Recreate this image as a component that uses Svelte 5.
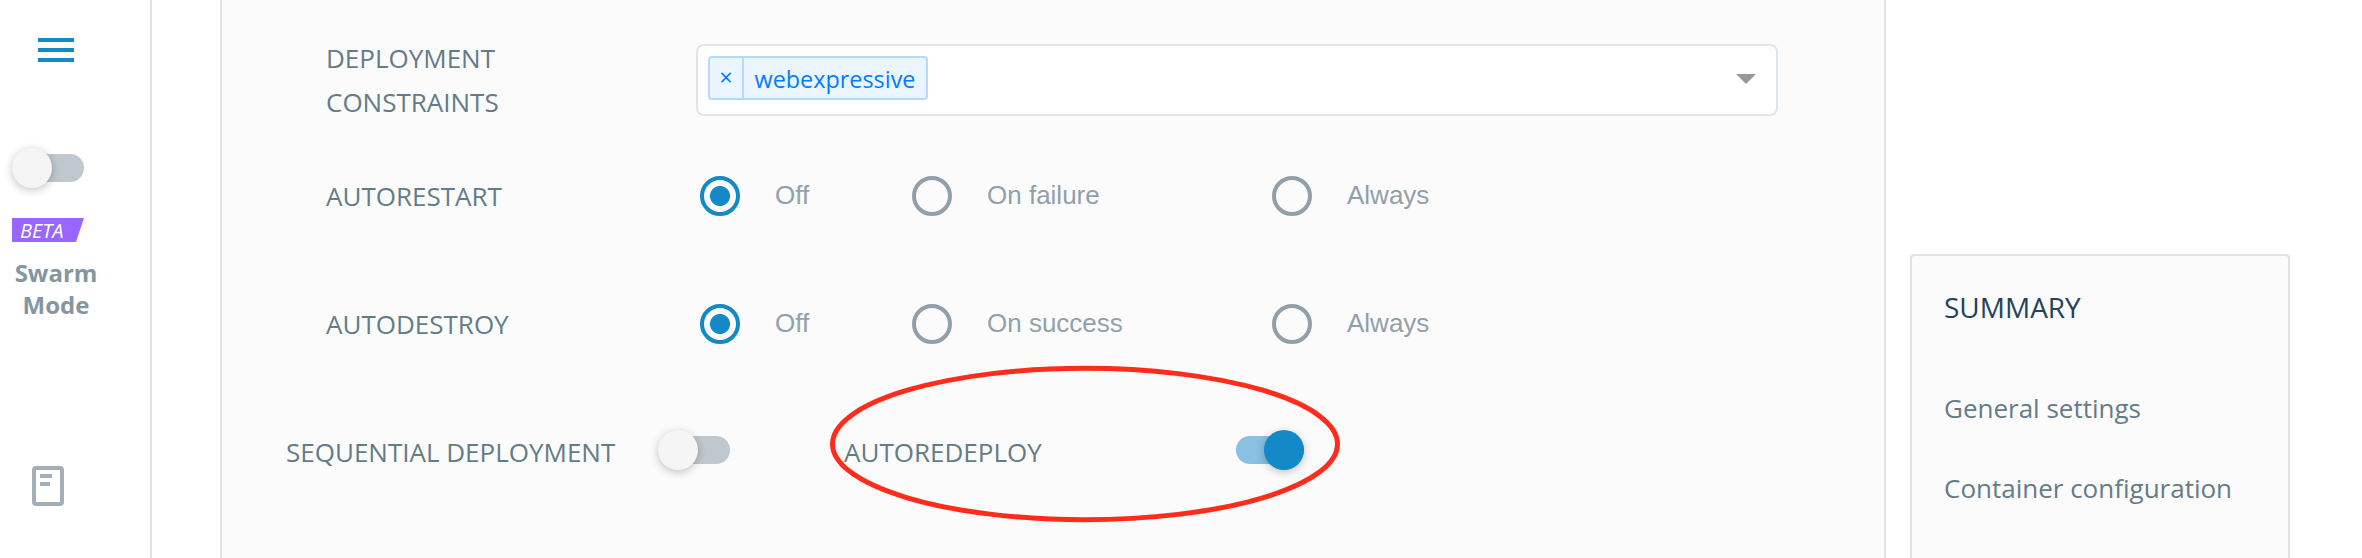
<script>
  const radioRows = [
    { label: 'AUTORESTART', options: ['Off', 'On failure', 'Always'] },
    { label: 'AUTODESTROY', options: ['Off', 'On success', 'Always'] }
  ];
  const sections = ['General settings', 'Container configuration'];
  let picked = $state([0, 0]);
  let swarm = $state(false);
  let sequential = $state(false);
  let redeploy = $state(true);
</script>

{#snippet toggle(on, flip, name)}
  <button class="toggle" class:on role="switch" aria-checked={on} aria-label={name} onclick={flip}>
    <span class="knob"></span>
  </button>
{/snippet}

<div class="page">
  <aside class="sidebar">
    <svg class="menu" width="36" height="24" viewBox="0 0 36 24" fill="#1489c8">
      <rect width="36" height="4" /><rect y="10" width="36" height="4" /><rect y="20" width="36" height="4" />
    </svg>
    {@render toggle(swarm, () => (swarm = !swarm), 'Swarm mode')}
    <div class="beta">BETA</div>
    <div class="mode">Swarm<br />Mode</div>
    <svg class="doc" width="32" height="40" viewBox="0 0 32 40">
      <rect x="2" y="2" width="28" height="36" rx="2" fill="none" stroke="#a1b0b8" stroke-width="4" />
      <path d="M8 8h12v4H8zM8 16h10v4H8z" fill="#a1b0b8" />
    </svg>
  </aside>

  <main class="panel">
    <div class="row constraints">
      <div class="label">DEPLOYMENT<br />CONSTRAINTS</div>
      <div class="select">
        <div class="tag"><span class="remove">×</span><span class="value">webexpressive</span></div>
        <svg width="20" height="10" viewBox="0 0 20 10"><path d="M0 0h20L10 10z" fill="#999" /></svg>
      </div>
    </div>
    {#each radioRows as row, r}
      <div class="row choice">
        <div class="label">{row.label}</div>
        <div class="options">
          {#each row.options as option, i}
            <button class="option" class:checked={picked[r] === i} onclick={() => (picked[r] = i)}>
              <span class="circle"></span><span>{option}</span>
            </button>
          {/each}
        </div>
      </div>
    {/each}
    <div class="switches">
      <div class="label seq">SEQUENTIAL DEPLOYMENT</div>
      {@render toggle(sequential, () => (sequential = !sequential), 'Sequential deployment')}
      <div class="redeploy">
        <div class="label">AUTOREDEPLOY</div>
        {@render toggle(redeploy, () => (redeploy = !redeploy), 'Autoredeploy')}
        <svg class="ring" width="512" height="160" viewBox="0 0 512 160">
          <ellipse cx="256" cy="80" rx="252.5" ry="75.7" fill="none" stroke="#ff2c1c" stroke-width="5" />
        </svg>
      </div>
    </div>
  </main>

  <section class="summary">
    <h2>SUMMARY</h2>
    {#each sections as section}
      <div class="section">{section}</div>
    {/each}
  </section>
</div>

<style>
  :global(body) { background: #fff; overflow: hidden; }
  .page {
    display: flex;
    align-items: flex-start;
    height: 558px;
    overflow: hidden;
    font-family: 'Open Sans', sans-serif;
    font-size: 26px;
    color: #647b88;
  }
  button { border: 0; padding: 0; background: none; font: inherit; color: inherit; cursor: pointer; }
  svg { display: block; }

  .sidebar {
    box-sizing: border-box;
    width: 152px;
    height: 558px;
    padding: 38px 0 0 12px;
    border-right: 2px solid #dfe4e8;
    flex: none;
  }
  .menu { margin: 0 0 86px 26px; }
  .beta {
    width: 72px;
    height: 24px;
    margin-top: 30px;
    box-sizing: border-box;
    padding-left: 8px;
    background: #9966ff;
    clip-path: polygon(0 0, 100% 0, 64px 100%, 0 100%);
    color: #fff;
    font-size: 20px;
    font-style: italic;
    line-height: 25px;
  }
  .mode {
    width: 88px;
    margin-top: 15px;
    text-align: center;
    font-size: 24px;
    font-weight: 700;
    line-height: 32px;
    color: #8396a0;
  }
  .doc { margin: 145px 0 0 20px; }

  .toggle {
    display: flex;
    align-items: center;
    width: 72px;
    height: 40px;
    flex: none;
  }
  .toggle::before {
    content: '';
    width: 68px;
    height: 28px;
    flex: none;
    margin-left: 4px;
    border-radius: 14px;
    background: #bfc8ce;
  }
  .knob {
    width: 40px;
    height: 40px;
    flex: none;
    margin-left: -72px;
    border-radius: 50%;
    background: #f5f5f5;
    box-shadow: 0 2px 8px rgba(0, 0, 0, 0.24);
  }
  .toggle.on::before { margin-left: 0; background: #89c1e2; }
  .toggle.on .knob { margin-left: -40px; background: #1489c8; }

  .panel {
    box-sizing: border-box;
    width: 1666px;
    height: 558px;
    margin-left: 68px;
    padding-top: 36px;
    background: #fbfbfb;
    border: solid #dfe4e8;
    border-width: 0 2px;
    flex: none;
  }
  .row { display: grid; grid-template-columns: 370px 1082px; padding-left: 104px; }
  .label { line-height: 44px; white-space: nowrap; }
  .constraints { height: 88px; margin-bottom: 50px; }
  .select {
    box-sizing: border-box;
    height: 72px;
    margin-top: 8px;
    padding: 10px 20px 14px 10px;
    display: flex;
    justify-content: space-between;
    border: 2px solid #dfe4e8;
    border-radius: 8px;
    background: #fff;
  }
  .select svg { margin-top: 18px; }
  .tag {
    box-sizing: border-box;
    display: flex;
    width: 220px;
    height: 44px;
    border: 2px solid #b3d9ff;
    border-radius: 4px;
    background: #ebf5ff;
    color: #007eff;
    font-size: 23.4px;
    line-height: 42px;
  }
  .remove { width: 32px; border-right: 2px solid #b3d9ff; text-align: center; line-height: 38px; }
  .value { flex: 1; text-align: center; }

  .choice { height: 44px; margin-bottom: 84px; }
  .options { display: grid; grid-template-columns: 212px 360px auto; padding: 2px 0 0 4px; }
  .option {
    display: flex;
    gap: 35px;
    height: 40px;
    font-family: 'Liberation Sans', Arial, sans-serif;
    line-height: 38px;
    color: #91a0aa;
  }
  .circle {
    box-sizing: border-box;
    width: 40px;
    height: 40px;
    border: 4px solid #91a0aa;
    border-radius: 50%;
  }
  .checked .circle { border-color: #1489c8; background: radial-gradient(circle, #1489c8 9.6px, transparent 10.4px); }

  .switches { display: flex; align-items: flex-start; height: 44px; padding-left: 64px; }
  .seq { width: 372px; }
  .redeploy { display: flex; justify-content: space-between; position: relative; width: 464px; margin-left: 114px; }
  .ring { position: absolute; left: -15.5px; top: -66px; pointer-events: none; }

  .summary {
    box-sizing: border-box;
    width: 380px;
    height: 320px;
    margin: 254px 0 0 24px;
    padding: 31px 32px;
    border: 2px solid #dfe4e8;
    border-radius: 4px;
    background: #fbfbfb;
    flex: none;
  }
  h2 { margin: 0 0 41px; font-size: 28px; font-weight: 400; line-height: 40px; color: #24435a; }
  .section { line-height: 80px; height: 80px; white-space: nowrap; }
</style>
